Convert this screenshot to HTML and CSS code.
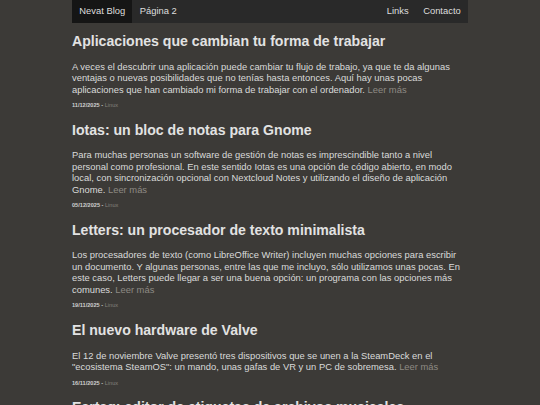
FILE: index.html
```html
<!DOCTYPE html>
<html lang="es">
<head>
<meta charset="utf-8">
<title>Nevat Blog</title>
<link rel="stylesheet" href="styles.css">
</head>
<body>
<div class="wrap">
  <nav class="nav">
    <div class="nav-left">
      <a class="nav-item active" href="#">Nevat Blog</a>
      <a class="nav-item" href="#">Página 2</a>
    </div>
    <div class="nav-right">
      <a class="nav-item" href="#">Links</a>
      <a class="nav-item" href="#">Contacto</a>
    </div>
  </nav>
  <main class="posts">
    <article class="post">
      <h2 class="post-title">Aplicaciones que cambian tu forma de trabajar</h2>
      <p class="post-body">A veces el descubrir una aplicación puede cambiar tu flujo de trabajo, ya que te da algunas ventajas o nuevas posibilidades que no tenías hasta entonces. Aquí hay unas pocas aplicaciones que han cambiado mi forma de trabajar con el ordenador. <a class="more" href="#">Leer más</a></p>
      <div class="meta"><span class="date">11/12/2025 - </span><a class="tag" href="#">Linux</a></div>
    </article>
    <article class="post">
      <h2 class="post-title">Iotas: un bloc de notas para Gnome</h2>
      <p class="post-body">Para muchas personas un software de gestión de notas es imprescindible tanto a nivel personal como profesional. En este sentido Iotas es una opción de código abierto, en modo local, con sincronización opcional con Nextcloud Notes y utilizando el diseño de aplicación Gnome. <a class="more" href="#">Leer más</a></p>
      <div class="meta"><span class="date">05/12/2025 - </span><a class="tag" href="#">Linux</a></div>
    </article>
    <article class="post">
      <h2 class="post-title">Letters: un procesador de texto minimalista</h2>
      <p class="post-body">Los procesadores de texto (como LibreOffice Writer) incluyen muchas opciones para escribir un documento. Y algunas personas, entre las que me incluyo, sólo utilizamos unas pocas. En este caso, Letters puede llegar a ser una buena opción: un programa con las opciones más comunes. <a class="more" href="#">Leer más</a></p>
      <div class="meta"><span class="date">19/11/2025 - </span><a class="tag" href="#">Linux</a></div>
    </article>
    <article class="post">
      <h2 class="post-title">El nuevo hardware de Valve</h2>
      <p class="post-body">El 12 de noviembre Valve presentó tres dispositivos que se unen a la SteamDeck en el "ecosistema SteamOS": un mando, unas gafas de VR y un PC de sobremesa. <a class="more" href="#">Leer más</a></p>
      <div class="meta"><span class="date">16/11/2025 - </span><a class="tag" href="#">Linux</a></div>
    </article>
    <article class="post">
      <h2 class="post-title">Eartag: editor de etiquetas de archivos musicales</h2>
    </article>
  </main>
</div>
</body>
</html>
```

FILE: styles.css
```css
html, body {
  margin: 0;
  padding: 0;
  background: #3c3a37;
  overflow: hidden;
}

body {
  font-family: "Liberation Sans", Arial, sans-serif;
  color: #dcdcdc;
}

a {
  text-decoration: none;
}

.wrap {
  width: 396px;
  margin: 0 auto;
}

.nav {
  display: flex;
  justify-content: space-between;
  background: #292929;
  height: 22.5px;
}

.nav-left,
.nav-right {
  display: flex;
}

.nav-item {
  display: block;
  padding: 0 7.3px;
  font-size: 9.4px;
  line-height: 22.5px;
  color: #dedede;
}

.nav-item.active {
  background: #151515;
}

.posts {
  padding-top: 10.6px;
}

.post {
  padding-bottom: 12.4px;
}

.post-title {
  margin: 0;
  font-size: 14.1px;
  line-height: 17px;
  font-weight: bold;
  color: #e2e2e2;
}

.post-body {
  margin: 10.7px 0 7px;
  font-size: 9.4px;
  line-height: 11.5px;
  color: #dadada;
}

.more {
  color: #8e8a84;
}

.meta {
  font-size: 5.6px;
  line-height: 7px;
}

.date {
  font-weight: bold;
  color: #cfcfcf;
}

.tag {
  color: #85827d;
}
```
